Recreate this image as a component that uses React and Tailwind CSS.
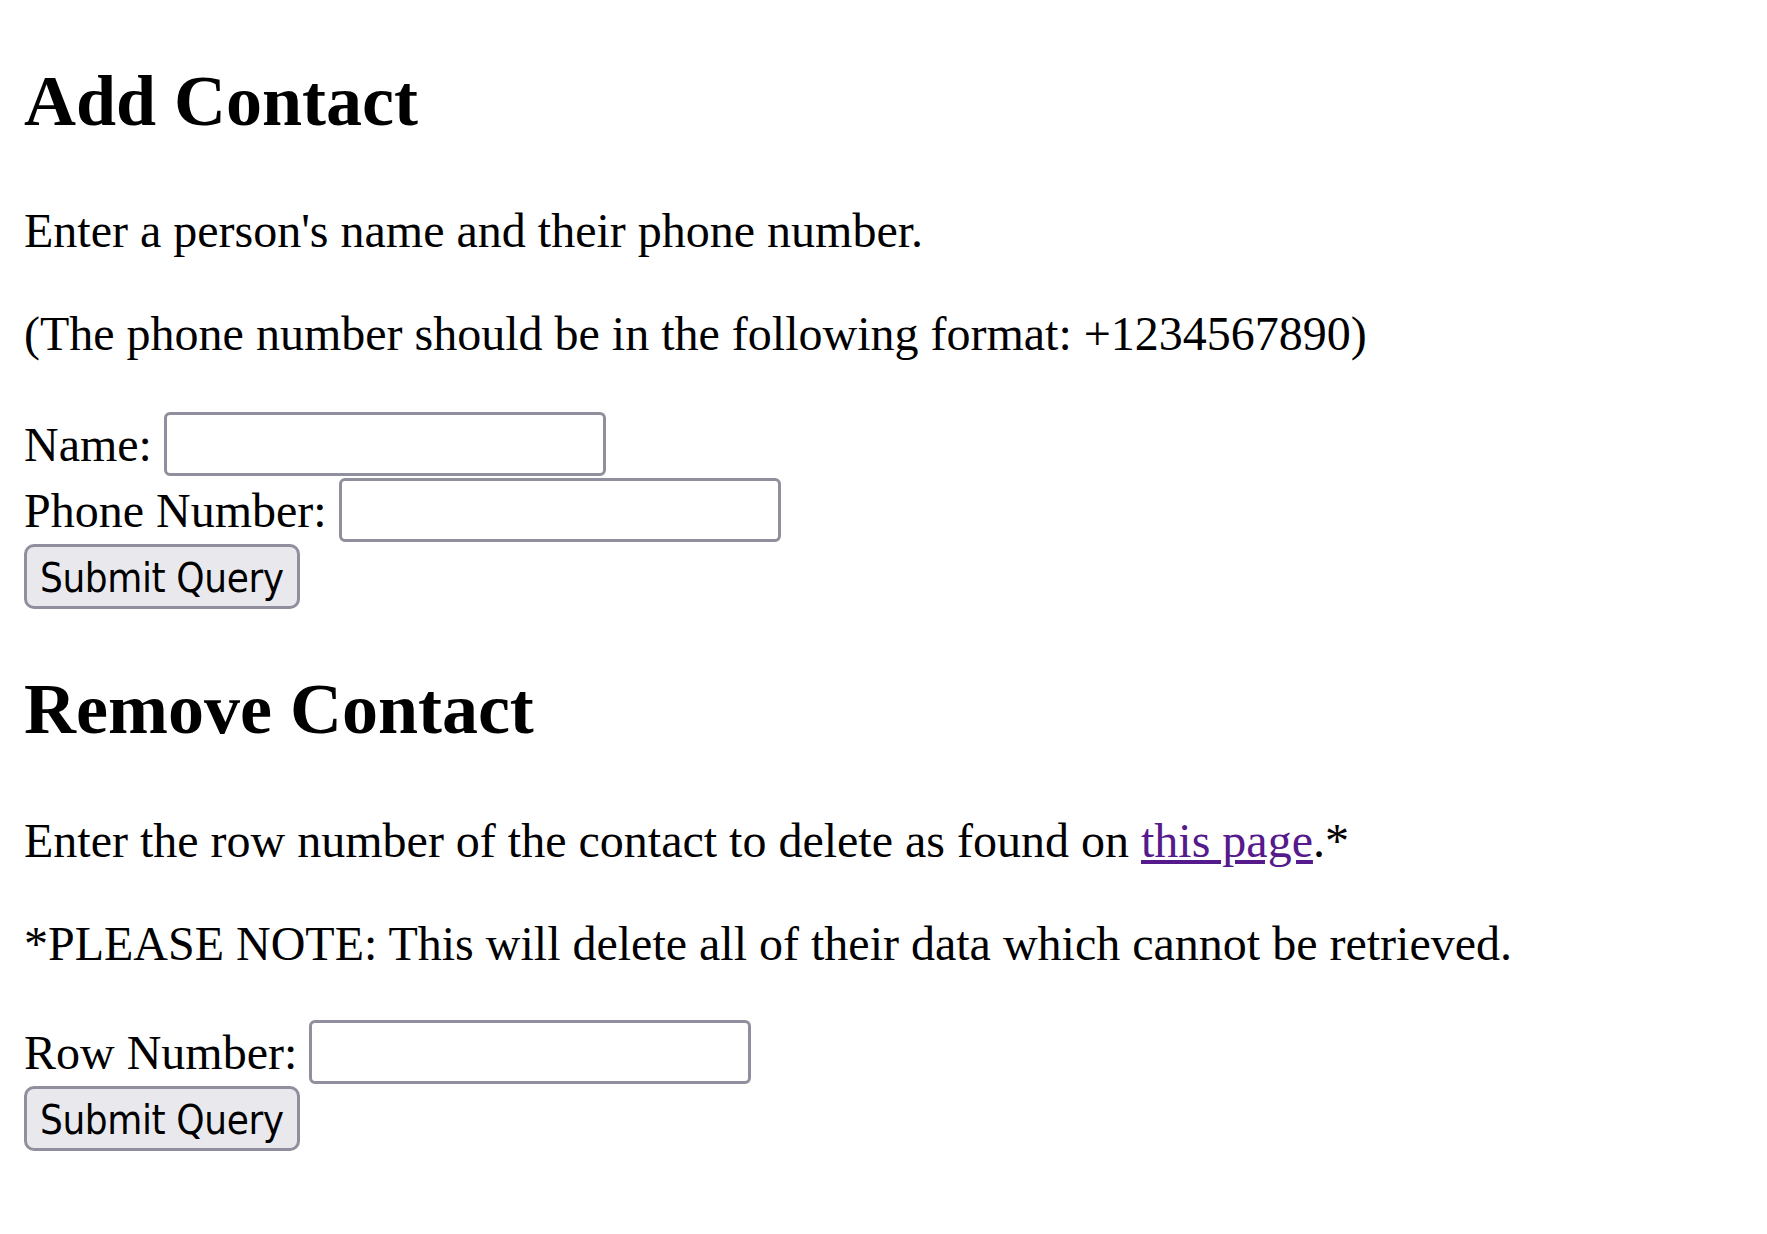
import React from 'react';

function Field({ label }) {
  return (
    <div className="h-[66px] flex items-center gap-[12px]">
      <label className="text-[48px] leading-[normal]">{label}</label>
      <input
        type="text"
        className="w-[442px] h-[64px] border-[3px] border-[#8f8f9d] rounded-[6px] bg-white px-[6px] text-[40px] outline-none"
      />
    </div>
  );
}

function SubmitButton() {
  return (
    <div className="h-[66px] flex items-center">
      <button
        type="button"
        className="h-[65px] px-[13px] pt-[4px] border-[3px] border-[#8f8f9d] rounded-[10px] bg-[#e9e9ed] text-black text-[40px] leading-[normal] tracking-[-0.4px] font-['DejaVu_Sans_Condensed','DejaVu_Sans',sans-serif]"
      >
        Submit Query
      </button>
    </div>
  );
}

export default function App() {
  return (
    <div className="min-h-screen bg-white text-black px-[24px] pt-[60px] pb-[60px] font-['Liberation_Serif','Times_New_Roman',serif]">
      {/* Add */}
      <h2 className="text-[72px] font-bold leading-[normal]">Add Contact</h2>
      <p className="mt-[60px] text-[48px] leading-[normal]">Enter a person's name and their phone number.</p>
      <p className="mt-[48px] text-[48px] leading-[normal]">(The phone number should be in the following format: +1234567890)</p>
      <form className="mt-[50px] flex flex-col items-start" onSubmit={(e) => e.preventDefault()}>
        <Field label="Name:" />
        <Field label="Phone Number:" />
        <SubmitButton />
      </form>

      {/* Remove */}
      <h2 className="mt-[59px] text-[72px] font-bold leading-[normal]">Remove Contact</h2>
      <p className="mt-[62px] text-[48px] leading-[normal]">
        Enter the row number of the contact to delete as found on{' '}
        <a href="#" className="text-[#551a8b] underline">this page</a>.*
      </p>
      <p className="mt-[48px] text-[48px] leading-[normal]">*PLEASE NOTE: This will delete all of their data which cannot be retrieved.</p>
      <form className="mt-[48px] flex flex-col items-start" onSubmit={(e) => e.preventDefault()}>
        <Field label="Row Number:" />
        <SubmitButton />
      </form>
    </div>
  );
}
